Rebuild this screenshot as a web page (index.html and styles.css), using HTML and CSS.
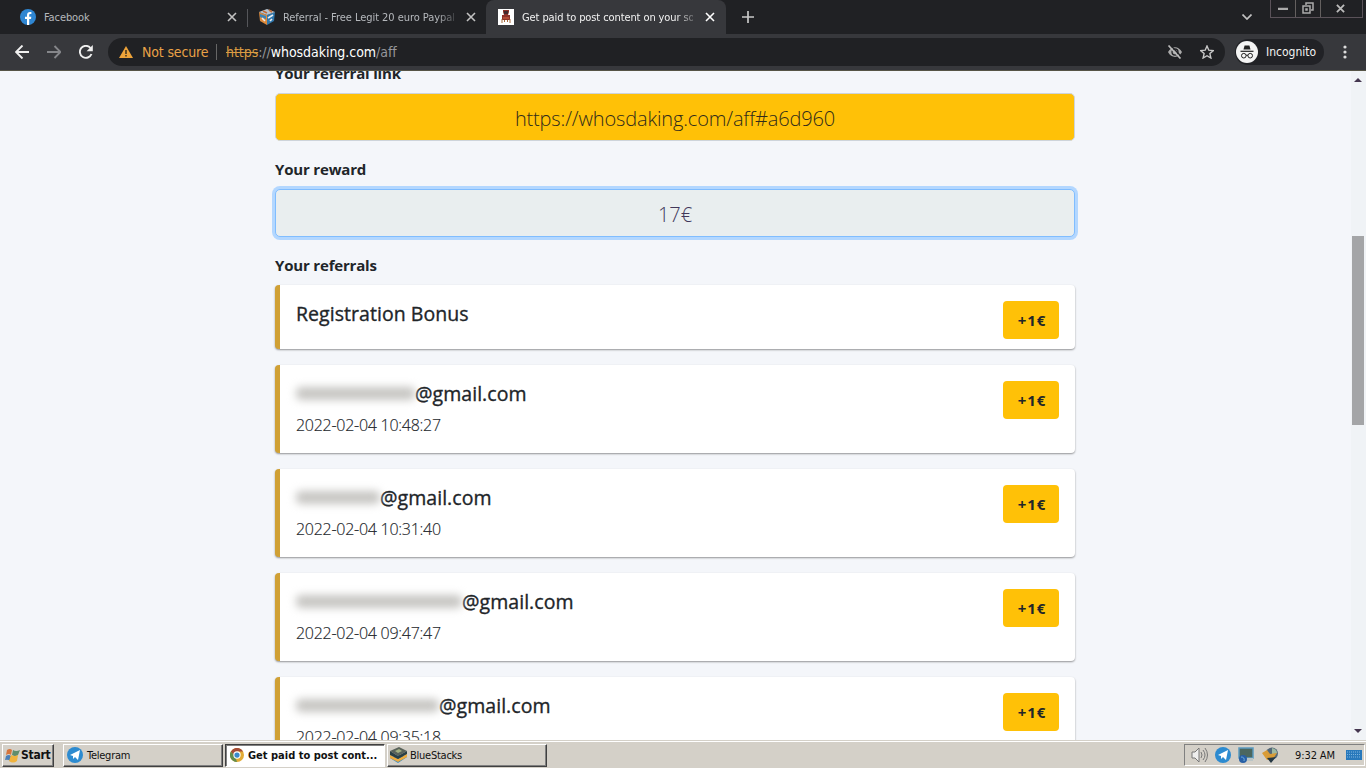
FILE: index.html
```html
<!DOCTYPE html>
<html lang="en">
<head>
    <meta charset="UTF-8">
    <meta name="viewport" content="width=device-width, initial-scale=1.0">
    <title>Get paid to post content on your social media</title>
    <link rel="stylesheet" href="styles.css">
</head>
<body>
    <header class="tab-strip">
        <div class="tab tab-first">
            <svg class="favicon" viewBox="0 0 16 16"><circle cx="8" cy="8" r="8" fill="#2f86d2"/><path d="M7 16V10H5V7.7h2V6.2C7 4 8.200 3 10 3h1.400v2H10.300C9.500 5 9.200 5.400 9.200 6.200v1.500h2.100L11 10H9.200v6z" fill="#fff"/></svg>
            <span class="tab-title fb-title">Facebook</span>
            <svg class="close" viewBox="0 0 10 10"><path d="M1 1l8 8M9 1L1 9"/></svg>
        </div>
        <div class="tab tab-second">
            <svg class="favicon" viewBox="0 0 16 16"><path d="M0 3l8 3v10l-7-4z" fill="#dc8a3c"/><path d="M16 3L8 6v10l7-4z" fill="#2f77ad"/><path d="M0 3l8-3 8 3-8 3z" fill="#b7c3ce"/><path d="M1 5l6 2v3L1 8z" fill="#3b83b8"/><path d="M3 9l3 3M9 9l5-3M13 10l-2 2" stroke="#e9eef2" stroke-width="1.600"/><path d="M4 2l4 2M10 1l3 2" stroke="#c46a35" stroke-width="1.600"/></svg>
            <span class="tab-title ref-title">Referral - Free Legit 20 euro Paypal</span>
            <svg class="close" viewBox="0 0 10 10"><path d="M1 1l8 8M9 1L1 9"/></svg>
        </div>
        <div class="tab tab-active">
            <svg class="favicon" viewBox="0 0 16 16"><path d="M0 0h16v16H0z" fill="#fff"/><path d="M5 1h6v2l-1 3h2v5H4V6h2L5 3z" fill="#8e3029"/><path d="M6 2h4v3H6z" fill="#42272c"/><path d="M4 10v4M6.500 11v2M9.500 11v2M12 10v4" stroke="#a5683b"/><path d="M5 8h6v2H5z" fill="#b44b36"/></svg>
            <span class="tab-title active-title">Get paid to post content on your so</span>
            <svg class="close" viewBox="0 0 10 10"><path d="M1 1l8 8M9 1L1 9"/></svg>
        </div>
        <svg class="new-tab" viewBox="0 0 12 12"><path d="M6 0v12M0 6h12"/></svg>
        <svg class="tab-search" viewBox="0 0 10 6"><path d="M.5.500L5 5 9.500.500"/></svg>
        <div class="window-buttons">
            <span><svg width="10" height="4"><path d="M0 3h10" stroke="#aaa" stroke-width="2.500"/></svg></span>
            <span><svg width="12" height="12" fill="none" stroke="#aaa" stroke-width="1.500"><path d="M4 3V1h7v7H9M1 4h7v7H1zM4 7h1v1H4z"/></svg></span>
            <span><svg width="9" height="9" viewBox="0 0 10 10" stroke="#bbb" stroke-width="2"><path d="M1 1l8 8M9 1L1 9"/></svg></span>
        </div>
    </header>

    <nav class="toolbar">
        <svg class="nav-icon back" viewBox="0 0 14 14"><path d="M14 7H1M7.500.500L1 7l6.500 6.500"/></svg>
        <svg class="nav-icon forward" viewBox="0 0 14 14"><path d="M0 7h13M7.500 1L13.500 7l-6 6"/></svg>
        <svg class="nav-icon reload" viewBox="0 0 14 14"><path d="M12.500 9A6 6 0 1 1 11.500 3"/><path d="M13.800 0v6.200H7.600z" fill="#f0f0f0" stroke="none"/></svg>
        <div class="address-bar">
            <svg class="warning" viewBox="0 0 14 12"><path d="M7 0l7 12H0z" fill="#eda33a"/><path d="M7 4v4M7 9v1.500" stroke="#302719" stroke-width="1.400"/></svg>
            <span class="not-secure">Not secure</span>
            <span class="url"><s>https</s><i>://</i><b>whosdaking.com</b><i>/aff</i></span>
            <svg class="eye" viewBox="0 0 16 14"><path d="M1 7c3.500-6.500 10.500-6.500 14 0-3.500 6.500-10.500 6.500-14 0z" fill="#aaa"/><circle cx="8" cy="7" r="3" fill="none" stroke="#202124" stroke-width="1.300"/><path d="M3.200 0l12 12.500" stroke="#202124" stroke-width="1.400"/><path d="M1.500.500l12 13" stroke="#bbb" stroke-width="1.700"/></svg>
            <svg class="star" viewBox="0 0 14 14"><path d="M7 1l1.800 4.200 4.500.400-3.400 3 1 4.400L7 10.700 3.100 13l1-4.400-3.400-3 4.500-.400z" fill="none" stroke="#c8c8c8" stroke-width="1.400"/></svg>
        </div>
        <div class="incognito">
            <svg width="22" height="22" viewBox="0 0 22 22"><circle cx="11" cy="11" r="11" fill="#f4f4f4"/><path d="M7.500 8.500L8.600 4.500h4.800l1.100 4z" fill="#222"/><path d="M4.500 10.300h13" stroke="#222" stroke-width="1.200"/><g fill="none" stroke="#222"><circle cx="7.800" cy="14.700" r="2.300"/><circle cx="14.200" cy="14.700" r="2.300"/><path d="M10 14.500q1-1 2 0"/></g></svg>
            <span>Incognito</span>
        </div>
        <svg class="menu" width="4" height="14" viewBox="0 0 4 14" fill="#ddd"><circle cx="2" cy="2" r="1.600"/><circle cx="2" cy="7" r="1.600"/><circle cx="2" cy="12" r="1.600"/></svg>
    </nav>

    <div class="viewport">
        <main class="content">
            <div class="form-group">
                <label>Your referral link</label>
                <div class="form-control link">https://whosdaking.com/aff#a6d960</div>
            </div>
            <div class="form-group">
                <label>Your reward</label>
                <div class="form-control reward">17€</div>
            </div>
            <div class="list-label">Your referrals</div>
            <div class="card">
                <h5>Registration Bonus</h5>
                <span class="amount">+1€</span>
            </div>
            <div class="card">
                <div>
                    <h5><span class="hidden-name name-1"></span>@gmail.com</h5>
                    <p>2022-02-04 10:48:27</p>
                </div>
                <span class="amount">+1€</span>
            </div>
            <div class="card">
                <div>
                    <h5><span class="hidden-name name-2"></span>@gmail.com</h5>
                    <p>2022-02-04 10:31:40</p>
                </div>
                <span class="amount">+1€</span>
            </div>
            <div class="card">
                <div>
                    <h5><span class="hidden-name name-3"></span>@gmail.com</h5>
                    <p>2022-02-04 09:47:47</p>
                </div>
                <span class="amount">+1€</span>
            </div>
            <div class="card">
                <div>
                    <h5><span class="hidden-name name-4"></span>@gmail.com</h5>
                    <p>2022-02-04 09:35:18</p>
                </div>
                <span class="amount">+1€</span>
            </div>
        </main>
        <div class="scrollbar">
            <svg width="8" height="4"><path d="M4 0l4 4H0z" fill="#44364f"/></svg>
            <div class="thumb"></div>
            <svg class="down" width="8" height="4"><path d="M0 0h8L4 4z" fill="#44364f"/></svg>
        </div>
    </div>

    <footer class="taskbar">
        <div class="start">
            <svg width="16" height="15" viewBox="0 0 16 15"><path d="M2 2q3-2 5 0L6 7Q4 5 1 7z" fill="#d6753c"/><path d="M8 2q3 2 7 0l-2 5q-3 2-6 0z" fill="#608d6c"/><path d="M1 8q3-2 5 0l-1 5q-2-2-5-1z" fill="#4a7fb8"/><path d="M6 7q4 2 7 0l-1 6q-4 3-8 0z" fill="#f0b33d"/></svg>
            <span>Start</span>
        </div>
        <div class="task telegram">
            <svg width="16" height="16" viewBox="0 0 16 16"><circle cx="8" cy="8" r="8" fill="#2d8bd0"/><path d="M3 8l10-5-2 10-3-3-2 2V9z" fill="#fff"/></svg>
            <span>Telegram</span>
        </div>
        <div class="task current">
            <svg width="14" height="14" viewBox="0 0 16 16"><circle cx="8" cy="8" r="8" fill="#e2ab35"/><path d="M1 4a8 8 0 0 1 14 0H8L5 10z" fill="#a54b37"/><path d="M1 4l5 6 2 6A8 8 0 0 1 1 4z" fill="#638c4c"/><circle cx="8" cy="8" r="4.200" fill="#fff"/><circle cx="8" cy="8" r="3" fill="#3989c9"/></svg>
            <span>Get paid to post cont...</span>
        </div>
        <div class="task bluestacks">
            <svg width="17" height="16" viewBox="0 0 17 16"><path d="M0 11l9-3 8 2-9 6z" fill="#3388c1"/><path d="M0 8l8 4 9-5v3l-9 5-8-4z" fill="#edaa3d"/><path d="M0 4l9-4 8 4-9 5z" fill="#59625a"/><path d="M0 4l8 5 9-5v3l-9 5-8-4z" fill="#293f45"/><path d="M5 4l4-2 3 2-4 2z" fill="#a2b083"/></svg>
            <span>BlueStacks</span>
        </div>
        <div class="tray">
            <svg width="17" height="16" viewBox="0 0 17 16" fill="none" stroke="#777"><path d="M1 5h3l4-4v14l-4-4H1z" fill="#eee"/><path d="M10 5q2 3 0 6M12 3q4 5 0 10M14 1q5 7 0 14"/></svg>
            <svg width="16" height="16" viewBox="0 0 16 16"><circle cx="8" cy="8" r="8" fill="#2d8bd0"/><path d="M3 8l10-5-2 10-3-3-2 2V9z" fill="#fff"/></svg>
            <svg width="17" height="16" viewBox="0 0 17 16"><path d="M1 1h14v10H1z" fill="#4b675e" stroke="#5b9bc0" stroke-width="1.500"/><path d="M8 11h7v3H8z" fill="#bac5c6"/><circle cx="5" cy="12" r="4" fill="#285fa5"/><path d="M3 10q4 0 3 4" stroke="#6db0da" fill="none"/></svg>
            <svg width="17" height="16" viewBox="0 0 17 16"><circle cx="10" cy="6.500" r="6" fill="#536878"/><path d="M10 1q5 1 5 5l-5 2z" fill="#9db8a0"/><path d="M0 6l5-3 3 4 7-1-4 6-6 1z" fill="#d99c37"/><path d="M5 11l4 5 5-6z" fill="#263844"/></svg>
            <span class="clock">9:32 AM</span>
            <svg width="16" height="12" viewBox="0 0 16 12"><path d="M0 1h16v10H0z" fill="#2879bc"/><path d="M1 3h14M1 5.500h14M1 8h14" stroke="#7eb4dd" stroke-dasharray="1 1"/></svg>
        </div>
    </footer>
</body>
</html>
```
FILE: styles.css
```css
* {
    margin: 0;
    padding: 0;
    box-sizing: border-box;
}

body {
    width: 1366px;
    height: 768px;
    overflow: hidden;
    display: flex;
    flex-direction: column;
    font-family: 'Open Sans', sans-serif;
    color: #212529;
    background: #f4f6fa;
}

svg {
    flex-shrink: 0;
}

.tab-strip {
    height: 34px;
    flex-shrink: 0;
    display: flex;
    background: #202124;
    font-family: 'DejaVu Sans Condensed', 'DejaVu Sans', sans-serif;
    font-size: 11px;
    color: #b5b8bc;
}

.tab {
    height: 34px;
    display: flex;
    align-items: center;
}

.tab-first {
    width: 248px;
    padding: 0 11px 0 20px;
    background: linear-gradient(#55565a, #55565a) right 9px / 1px 18px no-repeat;
}

.tab-second {
    width: 238px;
    padding: 0 10px 0 11px;
}

.tab-active {
    width: 240px;
    padding: 0 11px 0 12px;
    background: #37383c;
    border-radius: 8px 8px 0 0;
    color: #f2f2f2;
}

.favicon {
    width: 16px;
    height: 16px;
}

.tab-title {
    flex: 1;
    margin: 0 12px 0 8px;
    overflow: hidden;
    white-space: nowrap;
}

.fb-title {
    letter-spacing: -0.1px;
}

.ref-title,
.active-title {
    letter-spacing: -0.1px;
    mask-image: linear-gradient(90deg, #000 90%, transparent 104%);
}

.ref-title {
    letter-spacing: -0.05px;
}

.close {
    width: 10px;
    height: 10px;
    stroke: #c2c2c2;
    stroke-width: 1.6;
}

.tab-active .close {
    stroke: #fff;
}

.new-tab {
    width: 12px;
    height: 12px;
    margin: 11px 0 0 16px;
    stroke: #c7c7c7;
    stroke-width: 1.7;
}

.tab-search {
    width: 10px;
    height: 6px;
    margin: 14px 18px 0 auto;
    fill: none;
    stroke: #c2c2c2;
    stroke-width: 1.7;
}

.window-buttons {
    display: flex;
    width: 93px;
    height: 18px;
    margin-right: 3px;
    border: 1px solid #5a5259;
    border-top: 0;
}

.window-buttons span {
    width: 25px;
    display: flex;
    align-items: center;
    justify-content: center;
    padding-bottom: 1px;
    border-right: 1px solid #64605f;
}

.window-buttons span:last-child {
    flex: 1;
    padding-right: 3px;
    border: 0;
}

.toolbar {
    height: 37px;
    flex-shrink: 0;
    display: flex;
    align-items: center;
    background: #37383c;
    border-bottom: 1px solid #555446;
    padding: 0 19px 0 15px;
}

.nav-icon {
    width: 14px;
    height: 14px;
    margin-right: 18px;
    fill: none;
    stroke: #f0f0f0;
    stroke-width: 1.9;
}

.forward {
    stroke: #85868a;
}

.reload {
    margin-right: 15px;
}

.address-bar {
    width: 1117px;
    height: 28px;
    display: flex;
    align-items: center;
    padding: 0 11px;
    border-radius: 14px;
    background: #202124;
    font: 14px 'DejaVu Sans Condensed', sans-serif;
}

.warning {
    width: 14px;
    height: 12px;
    margin-right: 9px;
}

.not-secure {
    width: 75px;
    height: 16px;
    line-height: 16px;
    border-right: 1px solid #666;
    color: #e9a247;
    letter-spacing: -0.15px;
    white-space: nowrap;
}

.url {
    margin-left: 9px;
    letter-spacing: -0.05px;
}

.url s {
    color: #d99b42;
}

.url i {
    color: #96979b;
    font-style: normal;
}

.url b {
    color: #fff;
    font-weight: normal;
}

.eye {
    width: 16px;
    height: 14px;
    margin-left: auto;
}

.star {
    width: 14px;
    height: 14px;
    margin: 0 0 0 17px;
}

.incognito {
    width: 89px;
    height: 26px;
    margin-left: 10px;
    display: flex;
    align-items: center;
    gap: 8px;
    padding-left: 1px;
    border-radius: 13px;
    background: #212226;
    color: #f2f2f2;
    font: 12px 'DejaVu Sans Condensed', sans-serif;
    letter-spacing: 0;
}

.menu {
    margin-left: auto;
}

.viewport {
    height: 669px;
    flex-shrink: 0;
    display: flex;
    justify-content: space-between;
    overflow: hidden;
    background: #f4f6fa;
}

.content {
    width: 800px;
    margin: -10px 0 0 275px;
    line-height: 24px;
}

.form-group {
    margin-bottom: 16px;
}

label,
.list-label {
    display: block;
    height: 24px;
    margin-bottom: 8px;
    font-size: 15px;
    font-weight: 700;
    letter-spacing: -0.18px;
}

.form-control {
    height: 48px;
    border: 1px solid #ced4da;
    border-radius: 5px;
    text-align: center;
    font-size: 20px;
    font-weight: 300;
    line-height: 50px;
    letter-spacing: -0.15px;
}

.link {
    background: #ffc107;
    color: #302b1b;
}

.reward {
    background: #e9eeef;
    border-color: #80bdff;
    box-shadow: 0 0 0 3px #b3d7ff;
    color: #41375a;
}

.card {
    height: 88px;
    margin-bottom: 16px;
    padding: 16px;
    display: flex;
    justify-content: space-between;
    align-items: flex-start;
    background: #fff;
    border-left: 5px solid #d0a034;
    border-radius: 4px;
    box-shadow: 0 1px 2px rgba(0, 0, 0, 0.4);
}

.list-label + .card {
    height: 64px;
}

.card h5 {
    display: flex;
    align-items: center;
    height: 24px;
    margin-bottom: 8px;
    padding-top: 2px;
    font-size: 19.5px;
    font-weight: 500;
    letter-spacing: 0.05px;
    -webkit-text-stroke: 0.35px #212529;
}

.card p {
    font-size: 16px;
    font-weight: 300;
    letter-spacing: -0.27px;
    -webkit-text-stroke: 0.15px #212529;
}

.hidden-name {
    height: 13px;
    margin-top: -2px;
    border-radius: 5px;
    background: #c6c5c2;
    filter: blur(4px);
}

.name-1 {
    width: 119px;
}

.name-2 {
    width: 84px;
}

.name-3 {
    width: 166px;
}

.name-4 {
    width: 143px;
}

.amount {
    width: 56px;
    height: 38px;
    padding-left: 2px;
    border-radius: 4px;
    background: #ffc107;
    text-align: center;
    font-size: 15px;
    font-weight: 700;
    line-height: 39px;
    letter-spacing: 1px;
}

.scrollbar {
    width: 15px;
    display: flex;
    flex-direction: column;
    align-items: center;
    padding: 7px 2px 7px 0;
    background: #f0f3f6;
}

.thumb {
    width: 12px;
    height: 189px;
    margin-top: 154px;
    background: #a4a5a7;
}

.down {
    margin-top: auto;
}

.taskbar {
    height: 28px;
    flex-shrink: 0;
    display: flex;
    align-items: center;
    padding: 1px 1px 0 2px;
    background: #d4d0c8;
    border-top: 1px solid #d4d0c8;
    box-shadow: inset 0 1px #fff;
    color: #111;
    font: 11px 'DejaVu Sans Condensed', sans-serif;
    letter-spacing: -0.25px;
}

.start,
.task {
    height: 23px;
    display: flex;
    align-items: center;
    border: 1px solid;
    border-color: #fff #404040 #404040 #fff;
    box-shadow: inset -1px -1px #808080;
    white-space: nowrap;
}

.start {
    width: 52px;
    padding-left: 2px;
    font-size: 12px;
    font-weight: bold;
}

.task {
    width: 160px;
    padding-left: 3px;
    gap: 4px;
}

.telegram {
    margin-left: 9px;
}

.current {
    margin-left: 2px;
    padding-left: 4px;
    background: #fff;
    border-color: #404040 #fff #fff #404040;
    box-shadow: inset 1px 1px #808080;
    font-weight: bold;
    letter-spacing: 0;
}

.bluestacks {
    margin-left: 2px;
    padding-left: 2px;
    gap: 3px;
}

.tray {
    width: 181px;
    height: 22px;
    margin-left: auto;
    display: flex;
    align-items: center;
    gap: 7px;
    padding-left: 6px;
    border: 1px solid;
    border-color: #808080 #fff #fff #808080;
}

.clock {
    margin-left: 9px;
    width: 44px;
    white-space: nowrap;
    letter-spacing: -0.1px;
}
```
